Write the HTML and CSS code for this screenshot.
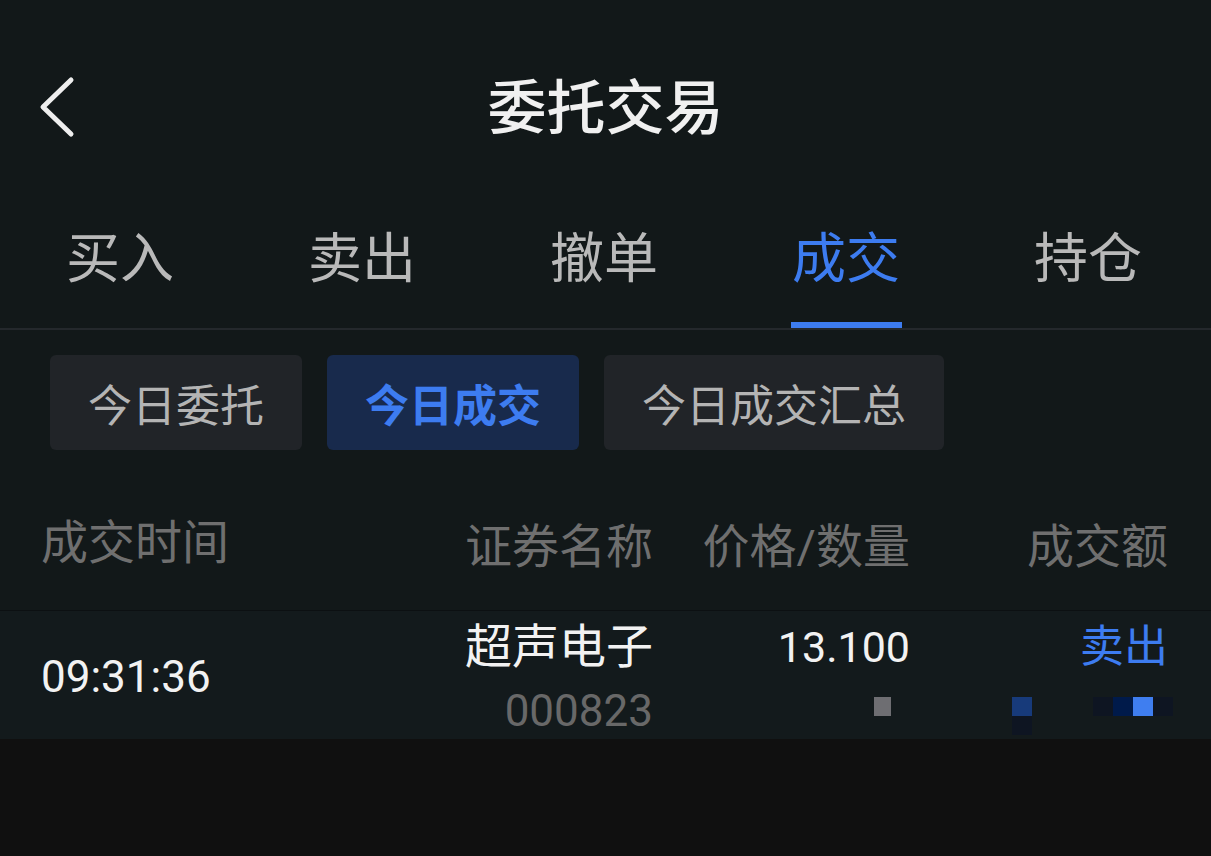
FILE: index.html
```html
<!DOCTYPE html>
<html lang="zh">
<head>
  <meta charset="UTF-8" />
  <meta name="viewport" content="width=device-width, initial-scale=1.0"/>
  <title>委托交易</title>
  <link rel="stylesheet" href="styles.css">
</head>
<body>

  <!-- 頂部導覽 -->
  <header class="topbar">
    <a class="back" href="#">
      <svg width="40" height="64" viewBox="0 0 40 64">
        <path d="M33 5 L5 32 L33 59" fill="none" stroke="#eeeeee" stroke-width="5" stroke-linecap="round" stroke-linejoin="round"/>
      </svg>
    </a>
    <h1 class="title">委托交易</h1>
    <span></span>
  </header>

  <!-- 主分頁 -->
  <nav class="tabs">
    <div class="tab">买入</div>
    <div class="tab">卖出</div>
    <div class="tab">撤单</div>
    <div class="tab active">成交</div>
    <div class="tab">持仓</div>
  </nav>

  <!-- 子分頁 -->
  <div class="chips">
    <div class="chip">今日委托</div>
    <div class="chip active">今日成交</div>
    <div class="chip wide">今日成交汇总</div>
  </div>

  <!-- 成交列表 -->
  <section class="list">
    <div class="row head">
      <div class="col-time">成交时间</div>
      <div class="col-name">证券名称</div>
      <div class="col-price">价格/数量</div>
      <div class="col-amount">成交额</div>
    </div>

    <div class="row item">
      <div class="col-time time">09:31:36</div>
      <div class="col-name">
        <div class="line main">超声电子</div>
        <div class="line code">000823</div>
      </div>
      <div class="col-price">
        <div class="line main num">13.100</div>
        <div class="mosaic price-mosaic">
          <span class="px grey"></span>
        </div>
      </div>
      <div class="col-amount">
        <div class="line side">卖出</div>
        <div class="mosaic amount-mosaic">
          <span class="stack">
            <span class="px navy"></span>
            <span class="px ink"></span>
          </span>
          <span class="gap"></span>
          <span class="px ink"></span>
          <span class="px deep"></span>
          <span class="px blue"></span>
          <span class="px ink"></span>
        </div>
      </div>
    </div>
  </section>

  <div class="rest"></div>

</body>
</html>
```

FILE: styles.css
```css
body {
  margin: 0;
  font-family: Roboto, 'Noto Sans CJK SC', sans-serif;
  background: #101010;
  color: #f0f0f0;
}
a { text-decoration: none; color: inherit; }

/* 頂部 */
.topbar {
  display: grid;
  grid-template-columns: 1fr auto 1fr;
  align-items: center;
  height: 214px;
  background: #121819;
}
.back { display: flex; align-items: center; margin-left: 38px; }
.title {
  margin: 0;
  font-size: 59px;
  font-weight: 500;
  line-height: 70px;
  color: #f0f0f0;
  padding-top: 4px;
}

/* 主分頁 */
.tabs {
  display: grid;
  grid-template-columns: repeat(5, 1fr);
  padding: 0 1px 0 0;
  background: #121819;
  border-bottom: 2px solid #24282c;
}
.tab {
  display: flex;
  flex-direction: column;
  align-items: center;
  padding-top: 18px;
  font-size: 54px;
  line-height: 56px;
  color: #b9b9b9;
  transform: translateX(-1px);
}
.tab::after {
  content: '';
  display: block;
  width: 111px;
  height: 6px;
  margin-top: 34px;
  background: transparent;
}
.tab.active { color: #3d7cf0; }
.tab.active::after { background: #3d7cf0; }

/* 子分頁 */
.chips {
  display: flex;
  gap: 25px;
  padding: 25px 50px 0;
  background: #121819;
}
.chip {
  width: 252px;
  height: 95px;
  display: flex;
  align-items: center;
  justify-content: center;
  border-radius: 6px;
  background: #212428;
  color: #b4b4b4;
  font-size: 44px;
}
.chip.wide { width: 340px; }
.chip.active {
  background: #182a4c;
  color: #3d7cf0;
  font-weight: bold;
}

/* 列表 */
.list { background: #121819; }
.row {
  display: grid;
  grid-template-columns: 362px 250px 257px 258px;
  padding: 0 43px 0 41px;
}
.row.head {
  padding-top: 70px;
  padding-bottom: 40px;
  font-size: 47px;
  line-height: 46px;
  color: #6f6f6f;
  border-bottom: 1px solid #0c1012;
}
.col-name, .col-price, .col-amount { text-align: right; }

.row.item {
  height: 128px;
  background: #131a1c;
}
.time {
  align-self: center;
  font-size: 44px;
  color: #f2f2f2;
}
.col-name, .col-price, .col-amount { padding-top: 4px; }
.line { line-height: 64px; }
.main { font-size: 47px; color: #f2f2f2; }
.num { font-size: 43px; }
.code { font-size: 44px; color: #686868; }
.side { font-size: 44px; color: #3d7cf0; }

/* 打碼 */
.mosaic {
  display: flex;
  justify-content: flex-end;
  margin-top: 18px;
}
.price-mosaic { margin-right: 19px; }
.amount-mosaic { margin-right: -5px; }
.px {
  display: block;
  width: 20px;
  height: 19px;
}
.px.grey { width: 17px; background: #6e6e72; }
.px.navy { background: #173a7a; }
.px.ink { background: #0e1522; }
.px.deep { background: #001a4a; }
.px.blue { background: #3f7ef0; }
.stack { display: flex; flex-direction: column; }
.gap { width: 61px; }

.rest { height: 118px; background: #101010; }
```
